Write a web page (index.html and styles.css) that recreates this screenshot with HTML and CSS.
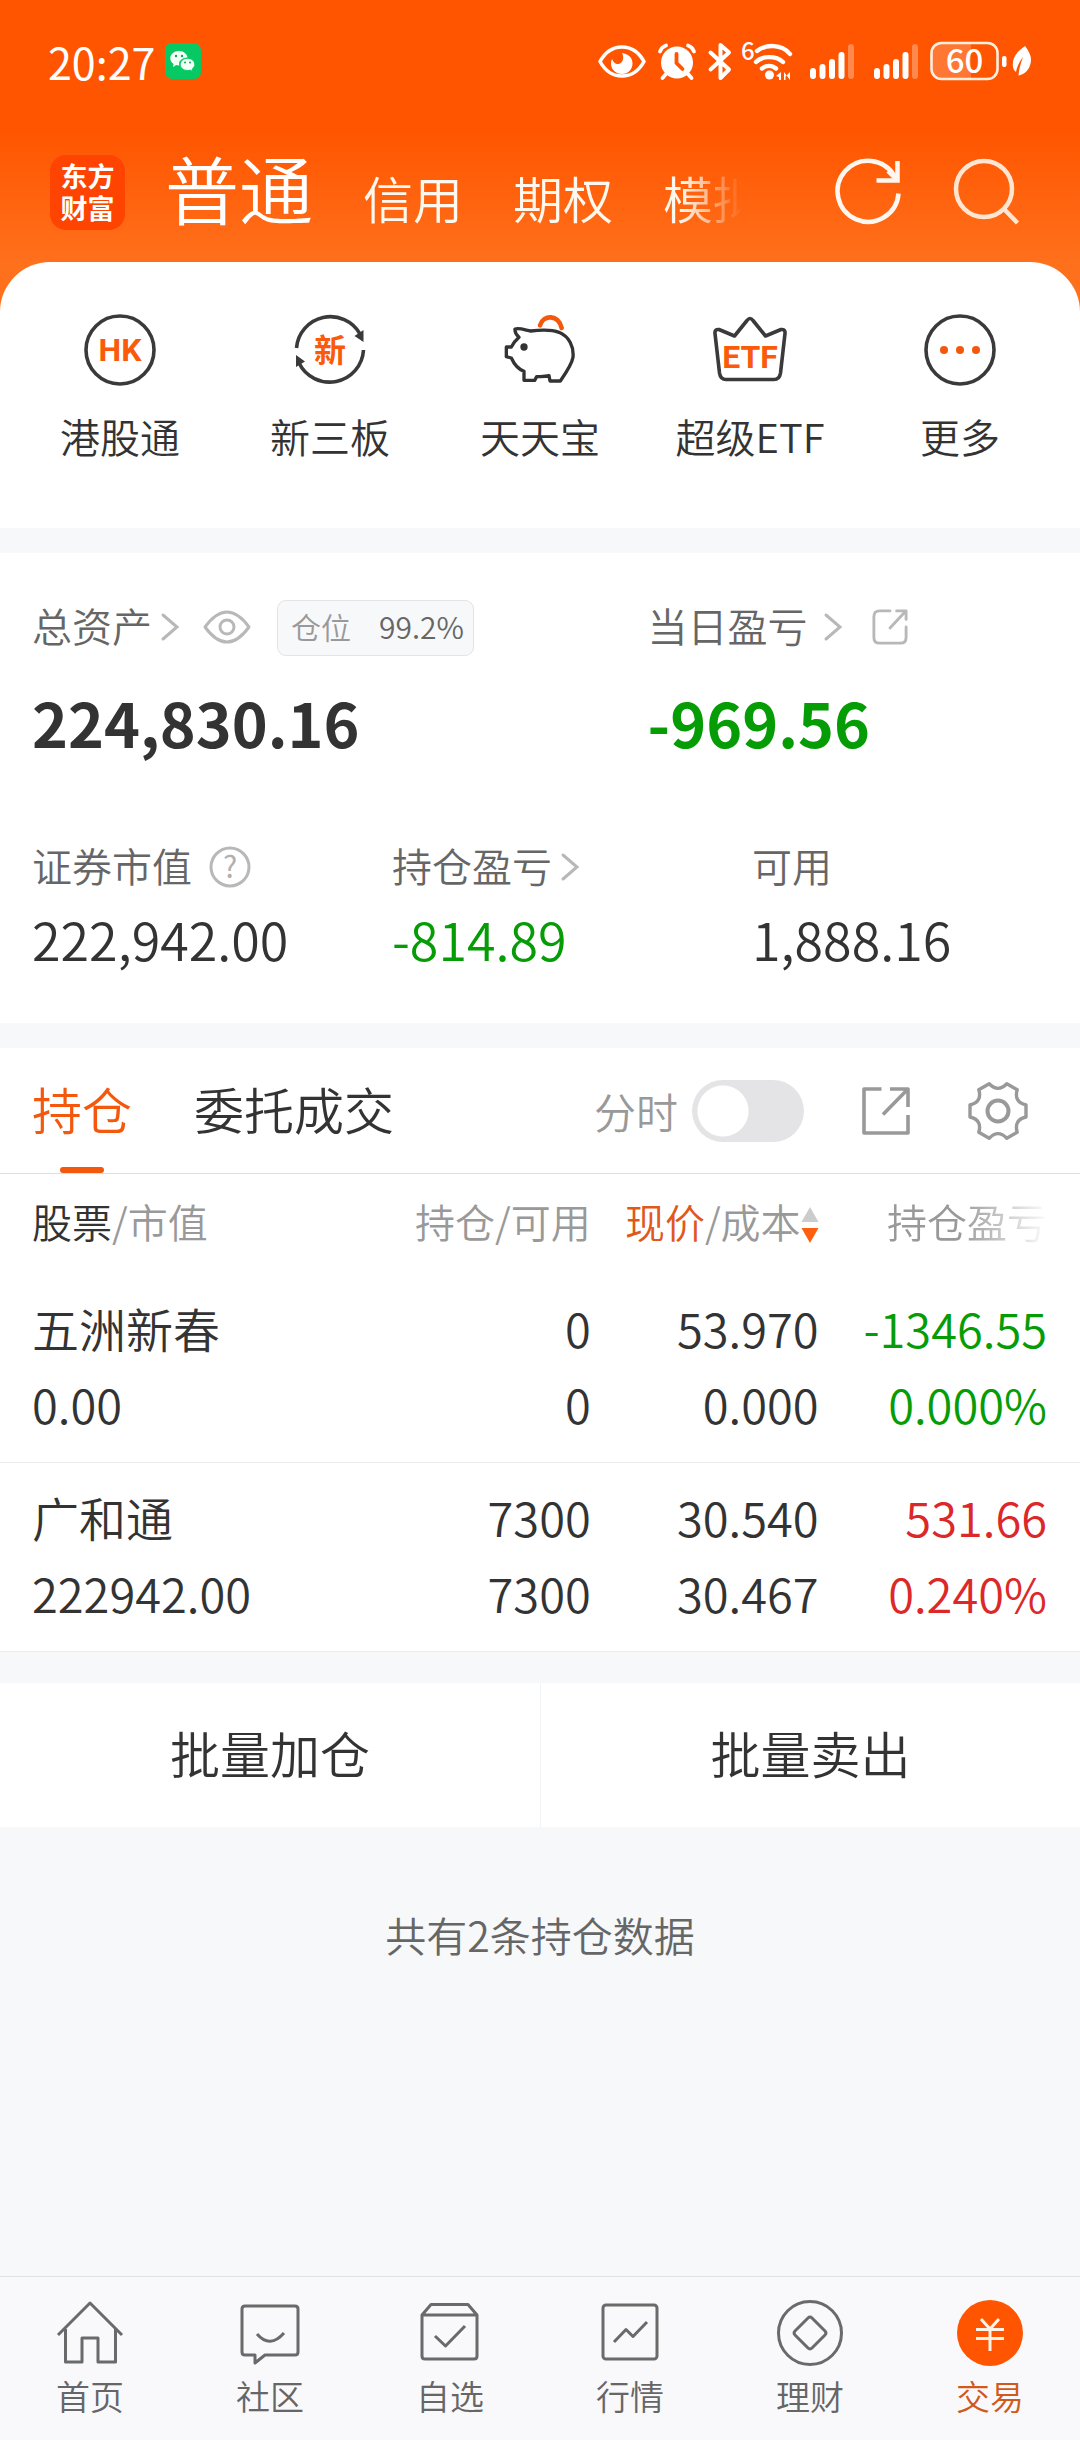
FILE: index.html
```html
<!DOCTYPE html>
<html lang="zh-CN">
<head>
<meta charset="utf-8">
<meta name="viewport" content="width=device-width, initial-scale=1">
<title>交易</title>
<link rel="stylesheet" href="styles.css">
</head>
<body>
<div class="page">
  <header class="top">
    <div class="status">
      <span class="status-time">20:27</span>
      <svg class="status-app" width="36" height="36" viewBox="0 0 36 36">
        <rect width="36" height="36" rx="7" fill="#07c963"/>
        <path d="M14 8c-5 0-8.700 3.300-8.700 7.300 0 2.300 1.200 4.300 3.200 5.600l-.5 3 3.200-1.800c1 .3 2 .4 3 .4z M14 8c4.500 0 8.200 2.900 8.500 6.600-5 0-8.500 3-8.500 6.700l.1 1.200z" fill="#f4fff8"/>
        <path d="M22.500 15.300c-4.100 0-7.300 2.700-7.300 6.100s3.200 6.100 7.300 6.100c.9 0 1.800-.1 2.600-.4l2.500 1.500-.4-2.600c1.600-1.100 2.600-2.800 2.600-4.600 0-3.400-3.200-6.100-7.300-6.100z" fill="#f4fff8" stroke="#07c963" stroke-width="1"/>
        <g fill="#07a950"><circle cx="11" cy="13" r="1.200"/><circle cx="17" cy="13" r="1.200"/><circle cx="20" cy="19.500" r="1"/><circle cx="25" cy="19.500" r="1"/></g>
      </svg>
      <div class="status-icons">
        <svg width="48" height="40" viewBox="0 0 48 40" fill="none" stroke="#fff" stroke-width="3.600" stroke-linejoin="round">
          <path d="M2 20.500C7 11.500 15 6 24 6s17 5.500 22 14.500C41 29.500 33 35 24 35S7 29.500 2 20.500z"/>
          <path d="M24 12c6.500 1 10.500 4.500 10.500 10.500S30 33 24 33s-11-4.500-11-10.500c0-1.500.3-3 1-4.500 1.500 4 4 5.500 6.500 5 4.500-1 6-6.500 3.500-11z" fill="#fff" stroke="none"/>
        </svg>
        <svg width="38" height="40" viewBox="0 0 38 40" fill="none" stroke="#fff" stroke-linecap="round">
          <circle cx="19" cy="21.500" r="16" fill="#fff" stroke="none"/>
          <path d="M2 10.500C3 7.500 5 5.500 8 4.500M36 10.500C35 7.500 33 5.500 30 4.500M8 33l-3.500 4M30 33l3.500 4" stroke-width="3.800"/>
          <path d="M18.500 13v9l6 6" stroke="#f50" stroke-width="3.800"/>
        </svg>
        <svg width="24" height="40" viewBox="0 0 24 40" fill="none" stroke="#fff" stroke-width="4" stroke-linecap="round" stroke-linejoin="round">
          <path d="M2.500 11.500L21 28.500 12.500 37V4L21 11.500 2.500 28.500"/>
        </svg>
        <svg class="icon-wifi" width="52" height="40" viewBox="0 0 52 40" fill="none" stroke="#fff" stroke-width="4.400" stroke-linecap="round">
          <text class="wifi-gen" x="-1" y="19">6</text>
          <path d="M15 10c9-7 25-7 33 3M14 21c6-6.500 20-6.500 27 0M20 27.500c4-3.500 10-3.500 14 0"/>
          <circle cx="27.500" cy="34" r="4.500" fill="#fff" stroke="none"/>
          <path d="M39 31v8h-2v-3l-3-1zM42 31v8h1.500v-3.500L48 31v8" fill="#fff" stroke="none"/>
        </svg>
        <svg class="icon-signal" width="44" height="40" viewBox="0 0 44 40" fill="#fff">
          <rect x="0" y="27" width="6" height="11" rx="3"/><rect x="9.500" y="23" width="6" height="15" rx="3"/><rect x="19" y="18" width="6" height="20" rx="3"/><rect x="28.500" y="11" width="6" height="27" rx="3"/><rect x="38" y="3" width="6" height="35" rx="3" opacity=".3"/>
        </svg>
        <svg class="icon-signal" width="44" height="40" viewBox="0 0 44 40" fill="#fff">
          <rect x="0" y="27" width="6" height="11" rx="3"/><rect x="9.500" y="23" width="6" height="15" rx="3"/><rect x="19" y="18" width="6" height="20" rx="3"/><rect x="28.500" y="11" width="6" height="27" rx="3"/><rect x="38" y="3" width="6" height="35" rx="3" opacity=".3"/>
        </svg>
        <svg width="78" height="40" viewBox="0 0 78 40">
          <path d="M11 2h30v36H11a10 10 0 0 1-10-10V12A10 10 0 0 1 11 2z" fill="#fff" opacity=".2"/>
          <rect x="1.500" y="2" width="66" height="36" rx="10" fill="none" stroke="#ffeede" stroke-width="2.600"/>
          <rect x="72" y="15" width="4.500" height="11" rx="2" fill="#fff"/>
          <text class="battery-text" x="34.500" y="32">60</text>
        </svg>
        <svg class="icon-leaf" width="20" height="40" viewBox="0 0 20 40">
          <path d="M13 5C3 12 0 18 1 26c.3 2 1.500 4 3 5 1-5 3-10 7-15-2 6-4 11-4.500 18.500 8-1.500 12-8 12.500-15C19.300 14 16 9 13 5z" fill="#fff"/>
        </svg>
      </div>
    </div>
    <div class="bar">
      <div class="logo">东方<br>财富</div>
      <nav class="accounts">
        <button class="account account-on">普通</button>
        <button class="account">信用</button>
        <button class="account">期权</button>
        <button class="account">模拟</button>
      </nav>
      <div class="bar-actions">
        <button class="icon-btn" aria-label="刷新">
          <svg width="68" height="68" viewBox="0 0 68 68" fill="none" stroke="#fff7ef" stroke-width="4.500">
            <path d="M64.500 35.500A30.500 30.500 0 1 1 60.500 18"/><path d="M63.500 3v19.500H42.500"/><path d="M54 13l8 8"/>
          </svg>
        </button>
        <button class="icon-btn" aria-label="搜索">
          <svg width="68" height="68" viewBox="0 0 68 68" fill="none" stroke="#ffe6d3" stroke-width="4.500">
            <circle cx="32" cy="31" r="28"/><path d="M51 50l14.500 15"/>
          </svg>
        </button>
      </div>
    </div>
    <nav class="quick">
      <a href="#" class="quick-item">
        <svg width="72" height="72" viewBox="0 0 72 72"><circle cx="36" cy="36" r="34" fill="none" stroke="#3a3a3a" stroke-width="3.600"/><text class="badge-text" x="36" y="47">HK</text></svg>
        <span>港股通</span>
      </a>
      <a href="#" class="quick-item">
        <svg width="72" height="72" viewBox="0 0 72 72"><g fill="none" stroke="#3a3a3a" stroke-width="3.600"><path d="M2.500 34A34 34 0 0 1 66 20M69.500 36A34 34 0 0 1 5 49"/></g><path d="M69.500 16v12l-9-6zM2 41v12l9-5.500z" fill="#3a3a3a"/><text class="badge-text badge-cjk" x="36" y="48">新</text></svg>
        <span>新三板</span>
      </a>
      <a href="#" class="quick-item">
        <svg width="72" height="72" viewBox="42 42 216 216" fill="none" stroke-linejoin="round" stroke-linecap="round">
          <path d="M150 76C160 43 206 43 215 84" stroke="#f4580c" stroke-width="14"/>
          <path d="M75 87C88 83 106 90 122 93C148 90 184 88 207 97C238 110 252 140 249 172C246 192 230 216 211 243H180L177 227C163 231 150 229 140 230L134 241H102V214C84 207 72 192 64 174L49 170V141H64C70 129 78 120 87 112C78 104 74 97 75 87z" stroke="#333" stroke-width="10"/>
          <circle cx="102" cy="141" r="11" fill="#333"/>
        </svg>
        <span>天天宝</span>
      </a>
      <a href="#" class="quick-item">
        <svg width="76" height="72" viewBox="0 0 76 72"><path d="M7 15.500l15.500 6.500L35 6.500q3-4 6 0L53.500 22 69 15.500q4.500-.5 4 4L68.500 59q-1 6.500-6.500 6.500H14Q8.500 65.500 7.500 59L3 19.500q-.5-4.500 4-4z" fill="none" stroke="#3a3a3a" stroke-width="3.600" stroke-linejoin="round"/><text class="badge-text" x="38" y="54">ETF</text></svg>
        <span>超级ETF</span>
      </a>
      <a href="#" class="quick-item">
        <svg width="72" height="72" viewBox="0 0 72 72"><circle cx="36" cy="36" r="34" fill="none" stroke="#3a3a3a" stroke-width="3.600"/><g fill="#f4580c"><circle cx="20" cy="36" r="4"/><circle cx="36" cy="36" r="4"/><circle cx="52" cy="36" r="4"/></g></svg>
        <span>更多</span>
      </a>
    </nav>
  </header>

  <section class="summary">
    <div class="totals">
      <div class="cell">
        <div class="label">总资产
          <svg class="chev" width="18" height="28" viewBox="0 0 18 28"><path d="M2 2l14 12L2 26"/></svg>
          <svg class="eye" width="48" height="34" viewBox="0 0 48 34" fill="none" stroke="#b8b8b8" stroke-width="3"><path d="M2 17C10 6 17 2 24 2s14 4 22 15c-8 11-15 15-22 15S10 28 2 17z" stroke-linejoin="round"/><circle cx="24" cy="17" r="7"/></svg>
          <span class="ratio"><span class="ratio-name">仓位</span><span>99.2%</span></span>
        </div>
        <div class="total">224,830.16</div>
      </div>
      <div class="cell">
        <div class="label">当日盈亏
          <svg class="chev chev-wide" width="18" height="28" viewBox="0 0 18 28"><path d="M2 2l14 12L2 26"/></svg>
          <svg class="share" width="36" height="36" viewBox="0 0 38 38" fill="none" stroke="#b8b8b8" stroke-width="3" stroke-linecap="round" stroke-linejoin="round"><path d="M19 2H8Q2 2 2 8v22q0 6 6 6h22q6 0 6-6V19M26 2h10v9M35 3L19 20"/></svg>
        </div>
        <div class="total down">-969.56</div>
      </div>
    </div>
    <div class="details">
      <div class="cell">
        <div class="label">证券市值
          <svg class="help" width="42" height="42" viewBox="0 0 42 42"><circle cx="21" cy="21" r="19" fill="none" stroke="#b8b8b8" stroke-width="3"/><text class="help-text" x="21" y="32">?</text></svg>
        </div>
        <div class="value">222,942.00</div>
      </div>
      <div class="cell">
        <div class="label">持仓盈亏
          <svg class="chev" width="18" height="28" viewBox="0 0 18 28"><path d="M2 2l14 12L2 26"/></svg>
        </div>
        <div class="value down">-814.89</div>
      </div>
      <div class="cell">
        <div class="label">可用</div>
        <div class="value">1,888.16</div>
      </div>
    </div>
  </section>

  <section class="positions">
    <div class="tabs">
      <button class="tab tab-on">持仓</button>
      <button class="tab">委托成交</button>
      <label class="switch">分时<input type="checkbox"></label>
      <button class="icon-btn tab-share" aria-label="分享">
        <svg width="48" height="48" viewBox="0 0 48 48" fill="none" stroke="#999" stroke-width="3.600" stroke-linejoin="round"><path d="M19.500 2H2v44h44V28M28 2h18v18M45 3L21 27.500"/></svg>
      </button>
      <button class="icon-btn" aria-label="设置">
        <svg width="60" height="60" viewBox="-30 -30 60 60" fill="none" stroke="#999" stroke-width="3.400" stroke-linejoin="round"><path d="M28-6V6Q15.600 9 19.200 21.200L8.800 27.200Q0 18-8.800 27.200L-19.200 21.200Q-15.600 9-28 6V-6Q-15.600-9-19.200-21.200L-8.800-27.200Q0-18 8.800-27.200L19.200-21.200Q15.600-9 28-6z"/><circle r="10.500" stroke-width="4"/></svg>
      </button>
    </div>
    <table class="grid">
      <colgroup><col class="col-name"><col class="col-num"><col class="col-num"><col class="col-last"></colgroup>
      <thead>
        <tr>
          <th><span class="ink">股票</span>/市值</th>
          <th>持仓/可用</th>
          <th><span class="sorted">现价</span>/成本<svg class="sort" width="18" height="38" viewBox="0 0 18 38"><path d="M9 1l8.500 15H.5z" fill="#ccc"/><path d="M9 37l8.500-15H.5z" fill="#ff6010"/></svg></th>
          <th class="fade">持仓盈亏</th>
        </tr>
      </thead>
      <tbody>
        <tr><td>五洲新春<br>0.00</td><td>0<br>0</td><td>53.970<br>0.000</td><td class="down">-1346.55<br>0.000%</td></tr>
        <tr><td>广和通<br>222942.00</td><td>7300<br>7300</td><td>30.540<br>30.467</td><td class="up">531.66<br>0.240%</td></tr>
      </tbody>
    </table>
  </section>

  <div class="batch">
    <button>批量加仓</button>
    <button>批量卖出</button>
  </div>
  <p class="count">共有2条持仓数据</p>

  <nav class="dock">
    <a href="#"><svg width="66" height="66" viewBox="0 0 66 66"><path d="M1 35L33 3l32 32M8.500 29v33H25V38h16v24h17.500V29"/></svg>首页</a>
    <a href="#"><svg width="66" height="66" viewBox="0 0 66 66"><path d="M8 6h50q3 0 3 3v43q0 3-3 3H28l-10 8v-8H8q-3 0-3-3V9q0-3 3-3z"/><path d="M20 34q13 15 27-1"/></svg>社区</a>
    <a href="#"><svg width="66" height="66" viewBox="0 0 66 66"><path d="M5 15v41q0 3 3 3h49q3 0 3-3V15L51 4.500H14zM5 15h55M18 36l10.500 10L48 26"/></svg>自选</a>
    <a href="#"><svg width="66" height="66" viewBox="0 0 66 66"><rect x="6" y="5" width="54" height="54" rx="3"/><path d="M17 42l12-12.500 7 7L50 22"/></svg>行情</a>
    <a href="#"><svg width="66" height="66" viewBox="0 0 66 66"><circle cx="33" cy="33" r="31.500"/><path d="M31 18q2-2 4 0l13 13q2 2 0 4L35 48q-2 2-4 0L18 35q-2-2 0-4z"/></svg>理财</a>
    <a href="#" class="dock-on"><svg width="66" height="66" viewBox="0 0 66 66"><circle class="disc" cx="33" cy="33" r="33"/><path class="yen" d="M24 19l9 10 9-10M19 29.500h28M19 38.500h28M33 29v22"/></svg>交易</a>
  </nav>
</div>
</body>
</html>
```
FILE: styles.css
```css
* { box-sizing: border-box; }

body {
  margin: 0;
  font-family: "Noto Sans CJK SC", "Noto Sans", sans-serif;
  font-weight: 350;
  color: #333;
  background: #f7f8fa;
}

button {
  padding: 0;
  border: 0;
  background: none;
  font: inherit;
  color: inherit;
}

a { color: inherit; text-decoration: none; }
svg { display: block; flex: none; overflow: visible; }

.page {
  display: flex;
  flex-direction: column;
  min-height: 100vh;
}

/* header */
.top { background: linear-gradient(#f50 130px, #ff701c 262px); }

.status {
  display: flex;
  align-items: center;
  height: 122px;
  padding: 0 48px;
  color: #fff;
}
.status-time { font-size: 43px; line-height: 56px; font-weight: 400; }
.status-app { margin-left: 10px; }
.status-icons {
  display: flex;
  align-items: center;
  gap: 12px;
  margin-left: auto;
}
.icon-wifi { margin-left: -2px; }
.icon-signal { margin-left: 4px; }
.icon-signal + .icon-signal { margin-left: 8px; }
.icon-leaf { margin-left: -8px; }
.wifi-gen { font-size: 24px; font-weight: 500; fill: #fff; stroke: none; }
.battery-text { font-size: 33px; font-weight: 500; fill: #fff; text-anchor: middle; }

.bar {
  display: flex;
  align-items: center;
  height: 140px;
  padding: 0 60px 0 50px;
}
.logo {
  width: 75px;
  height: 75px;
  padding-top: 5px;
  border-radius: 16px;
  background: #ff4300;
  color: #fff;
  font-size: 27px;
  font-weight: 700;
  line-height: 32px;
  text-align: center;
}
.accounts {
  display: flex;
  flex: 1;
  align-items: baseline;
  gap: 50px;
  min-width: 0;
  margin: 0 92px 0 40px;
  overflow: hidden;
  white-space: nowrap;
  -webkit-mask-image: linear-gradient(to left, transparent, #000 60px);
  mask-image: linear-gradient(to left, transparent, #000 60px);
}
.account { font-size: 50px; line-height: 112px; color: #fff8ee; }
.account-on { font-size: 74px; color: #fff; }
.bar-actions { display: flex; gap: 50px; }

.quick {
  display: grid;
  grid-template-columns: repeat(5, 1fr);
  padding: 52px 15px 64px;
  border-radius: 50px 50px 0 0;
  background: #fff;
}
.quick-item {
  display: flex;
  flex-direction: column;
  align-items: center;
  gap: 22px;
  font-size: 40px;
  line-height: 56px;
}
.badge-text {
  font-family: Roboto, "Noto Sans CJK SC", sans-serif;
  font-size: 32px;
  font-weight: 700;
  fill: #fa5a0a;
  text-anchor: middle;
}
.badge-cjk { font-family: "Noto Sans CJK SC", sans-serif; }

/* account totals */
.summary {
  margin: 25px 0;
  padding: 45px 0 52px;
  background: #fff;
}
.totals { display: grid; grid-template-columns: 57% 43%; }
.details { display: grid; grid-template-columns: repeat(3, 1fr); margin-top: 77px; }
.cell { padding-left: 32px; }
.label {
  display: flex;
  align-items: center;
  height: 56px;
  padding-bottom: 2px;
  font-size: 40px;
  line-height: 54px;
  color: #666;
}
.label svg { margin-top: 4px; }
.total {
  margin-top: 28px;
  font-size: 61px;
  font-weight: 700;
  line-height: 79px;
}
.value { margin-top: 13px; font-size: 52px; line-height: 64px; }
.down { color: #059c05; }
.up { color: #dc2828; }

.chev {
  margin-left: 9px;
  fill: none;
  stroke: #b8b8b8;
  stroke-width: 3;
  stroke-linecap: round;
}
.chev-wide { margin-left: 16px; }
.eye { margin-left: 24px; }
.share { margin-left: 30px; }
.help { margin-left: 17px; }
.help-text { font-size: 30px; font-weight: 400; fill: #b0b0b0; text-anchor: middle; }
.ratio {
  display: flex;
  gap: 28px;
  margin: 6px 0 0 26px;
  padding: 0 9px 4px 13px;
  border: 1px solid #e2e3e6;
  border-radius: 9px;
  background: #f7f8fa;
  font-size: 30px;
  line-height: 50px;
}
.ratio-name { color: #999; }

/* positions */
.positions { background: #fff; }
.tabs {
  display: flex;
  align-items: center;
  height: 126px;
  padding: 0 52px 0 32px;
  border-bottom: 1px solid #e0e0e0;
}
.tab {
  position: relative;
  margin-right: 62px;
  padding-bottom: 6px;
  font-size: 50px;
  line-height: 118px;
}
.tab-on { color: #f4580c; }
.tab-on::after {
  content: "";
  position: absolute;
  bottom: 0;
  left: 50%;
  width: 44px;
  height: 6px;
  margin-left: -22px;
  border-radius: 3px;
  background: #f4580c;
}
.switch {
  display: flex;
  align-items: center;
  gap: 14px;
  margin-left: auto;
  font-size: 42px;
  color: #999;
}
.switch input {
  appearance: none;
  width: 112px;
  height: 62px;
  margin: 0;
  border-radius: 31px;
  background: radial-gradient(circle at 31px 31px, #fff 25px, #e4e4e6 26px);
}
.tab-share { margin: 0 58px; }

.grid {
  width: 100%;
  table-layout: fixed;
  border-collapse: collapse;
}
.col-name { width: 33.600%; }
.col-num { width: 21.100%; }
.col-last { width: 24.200%; }
.grid th {
  padding: 19px 0 25px;
  font-size: 40px;
  font-weight: inherit;
  line-height: 56px;
  text-align: right;
  white-space: nowrap;
  color: #999;
}
.grid td {
  padding: 16px 0 20px;
  border-bottom: 1px solid #ebedf0;
  font-size: 47px;
  line-height: 76px;
  text-align: right;
}
.grid th:first-child, .grid td:first-child { padding-left: 32px; text-align: left; }
.grid th:last-child, .grid td:last-child { padding-right: 33px; }
.ink { color: #333; }
.sorted { color: #e0581a; }
.sort { display: inline-block; vertical-align: -6px; }
.fade {
  -webkit-mask-image: linear-gradient(to left, transparent 30px, #000 120px);
  mask-image: linear-gradient(to left, transparent 30px, #000 120px);
}

.batch {
  display: grid;
  grid-template-columns: 1fr 1fr;
  margin-top: 31px;
  background: #fff;
}
.batch button { padding-bottom: 6px; font-size: 50px; line-height: 138px; }
.batch button + button { border-left: 1px solid #f3f4f6; }

.count {
  margin: 79px 0;
  font-size: 41px;
  line-height: 56px;
  text-align: center;
  color: #666;
}

/* bottom navigation */
.dock {
  display: grid;
  grid-template-columns: repeat(6, 1fr);
  margin-top: auto;
  padding: 23px 0 22px;
  border-top: 1px solid #e0e1e3;
  background: #f9f9fb;
}
.dock a {
  display: flex;
  flex-direction: column;
  align-items: center;
  gap: 8px;
  font-size: 34px;
  line-height: 44px;
  color: #666;
}
.dock svg { fill: none; stroke: #6a6a6a; stroke-width: 3; stroke-linejoin: round; }
.dock .disc { fill: #f50; stroke: none; }
.dock .yen { stroke: #fff3e8; }
.dock .dock-on { color: #d05a1c; }
```
